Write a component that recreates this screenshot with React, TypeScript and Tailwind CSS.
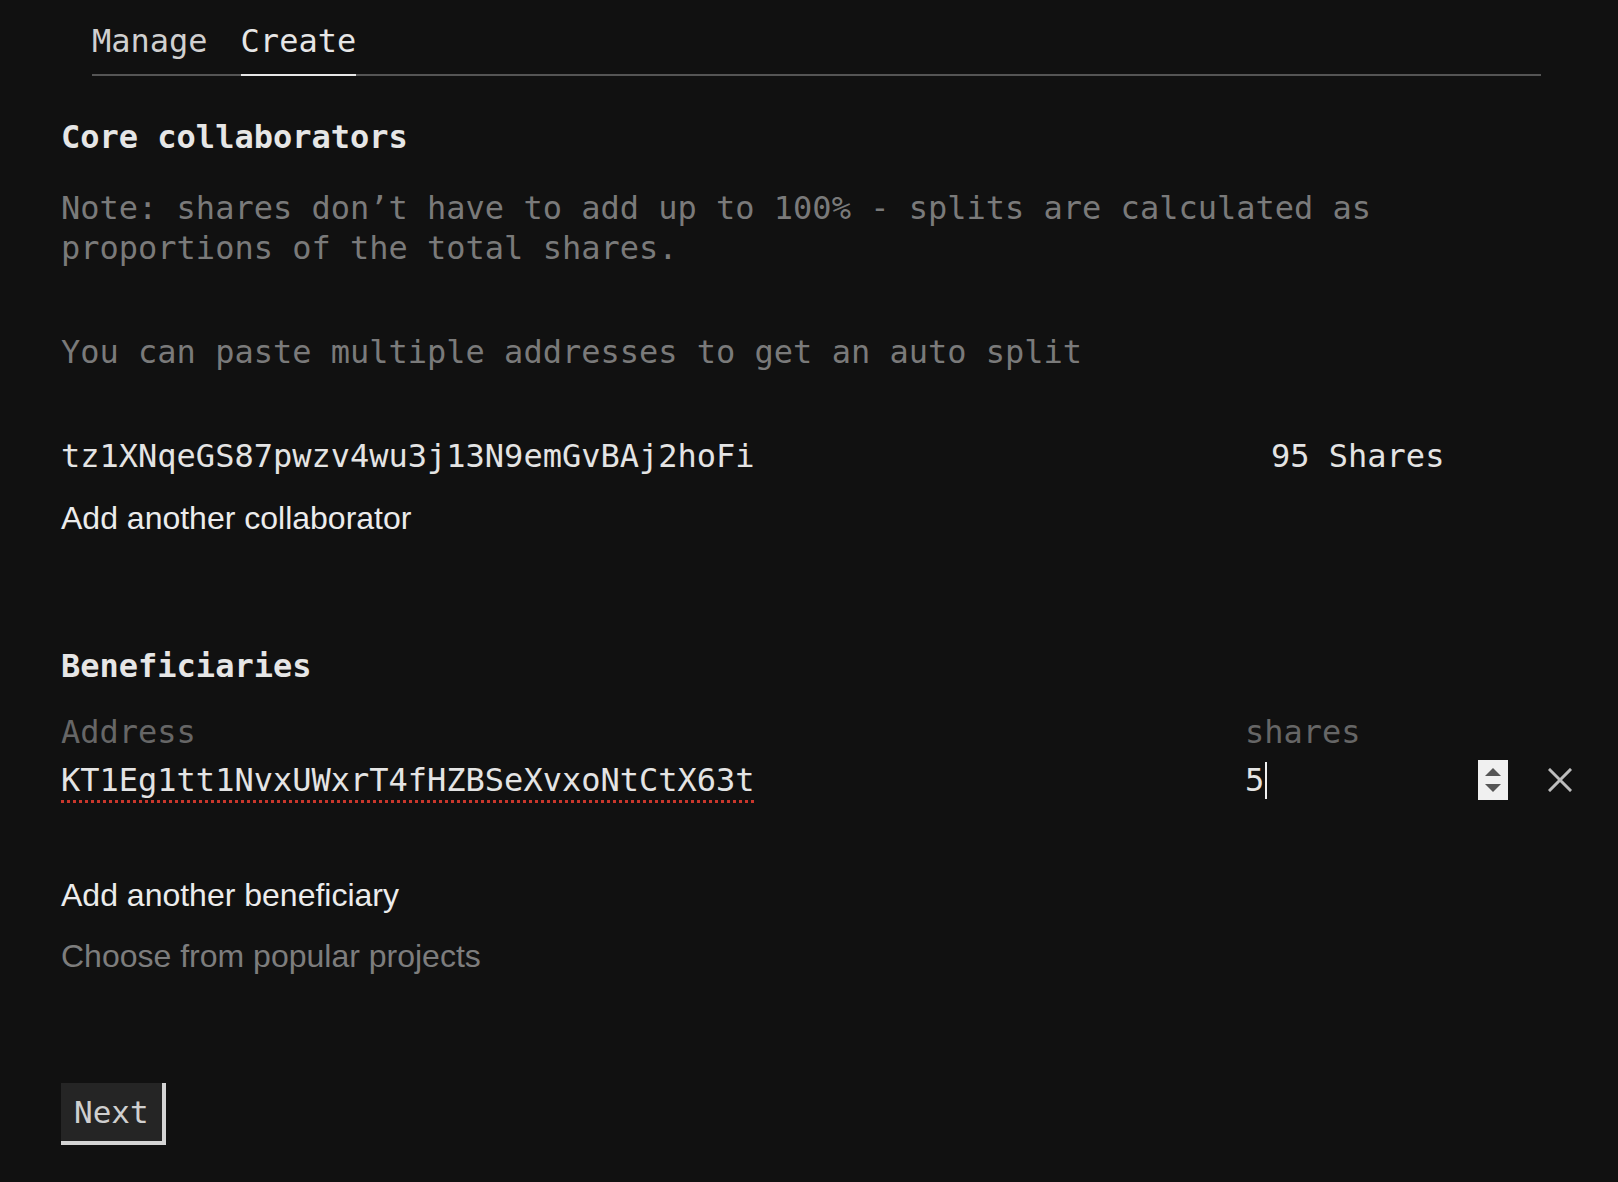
const MONO = "font-['DejaVu_Sans_Mono',monospace]";
const SANS = "font-['Liberation_Sans',Arial,sans-serif]";

const TABS = [
  { label: "Manage", active: false },
  { label: "Create", active: true },
];

function Spinner() {
  return (
    <div className="flex h-[40px] w-[30px] shrink-0 flex-col items-center justify-center gap-[8px] bg-[#f0f0f0]">
      <svg width="16" height="8" viewBox="0 0 16 8">
        <path d="M8 0 L16 8 L0 8 Z" fill="#555" />
      </svg>
      <svg width="16" height="8" viewBox="0 0 16 8">
        <path d="M0 0 L16 0 L8 8 Z" fill="#555" />
      </svg>
    </div>
  );
}

export default function App() {
  return (
    <div className={`min-h-[1182px] w-full bg-[#111111] ${MONO} text-[32px] leading-10 text-[#e4e4e4]`}>
      <div className="w-[1572px] pl-[61px] pt-[21px]">
        {/* tabs */}
        <nav className="mx-[31px] flex gap-[33px] border-b-2 border-[#555555]">
          {TABS.map((t) => (
            <button
              key={t.label}
              className={`-mb-[2px] border-b-2 pb-[13px] leading-10 ${
                t.active ? "border-[#e6e6e6] text-[#e6e6e6]" : "border-transparent text-[#d0d0d0]"
              }`}
            >
              {t.label}
            </button>
          ))}
        </nav>

        {/* core collaborators */}
        <h2 className="mt-[41px] font-bold text-[#e6e6e6]">Core collaborators</h2>
        <p className="mt-[31px] text-[#7a7a7a]">
          Note: shares don’t have to add up to 100% - splits are calculated as
          <br />
          proportions of the total shares.
        </p>
        <p className="mt-[64px] text-[#7a7a7a]">You can paste multiple addresses to get an auto split</p>

        <div className="mt-[64px] flex">
          <span className="w-[1210px] shrink-0">tz1XNqeGS87pwzv4wu3j13N9emGvBAj2hoFi</span>
          <span>95 Shares</span>
        </div>
        <button className={`mt-[22px] block ${SANS} text-[32px] leading-10 text-[#ececec]`}>
          Add another collaborator
        </button>

        {/* beneficiaries */}
        <h2 className="mt-[108px] font-bold text-[#e6e6e6]">Beneficiaries</h2>
        <div className="mt-[26px] flex">
          <div className="w-[1184px] shrink-0">
            <div className="text-[#666666]">Address</div>
            <div className="mt-[8px]">
              <span className="underline decoration-[#c9372c] decoration-dotted decoration-[3px] underline-offset-[9px]">
                KT1Eg1tt1NvxUWxrT4fHZBSeXvxoNtCtX63t
              </span>
            </div>
          </div>
          <div className="flex-1">
            <div className="text-[#666666]">shares</div>
            <div className="mt-[8px] flex items-center">
              <div className="flex w-[233px] shrink-0 items-center">
                <span>5</span>
                <span className="ml-[1px] h-[37px] w-[2px] bg-[#f0f0f0]" />
              </div>
              <Spinner />
              <svg className="ml-[40px] shrink-0" width="24" height="24" viewBox="0 0 24 24">
                <path d="M2 2 L22 22 M22 2 L2 22" stroke="#bdbdbd" strokeWidth="3" strokeLinecap="square" />
              </svg>
            </div>
          </div>
        </div>

        <button className={`mt-[75px] block ${SANS} text-[32px] leading-10 text-[#ececec]`}>
          Add another beneficiary
        </button>
        <button className={`mt-[21px] block ${SANS} text-[32px] leading-10 text-[#7d7d7d]`}>
          Choose from popular projects
        </button>

        <button className="mt-[107px] block h-[62px] w-[105px] border-b-4 border-r-4 border-[#d4d4d4] bg-[#252525] pl-[13px] text-left text-[31px] text-[#cfcfcf]">
          Next
        </button>
      </div>
    </div>
  );
}
